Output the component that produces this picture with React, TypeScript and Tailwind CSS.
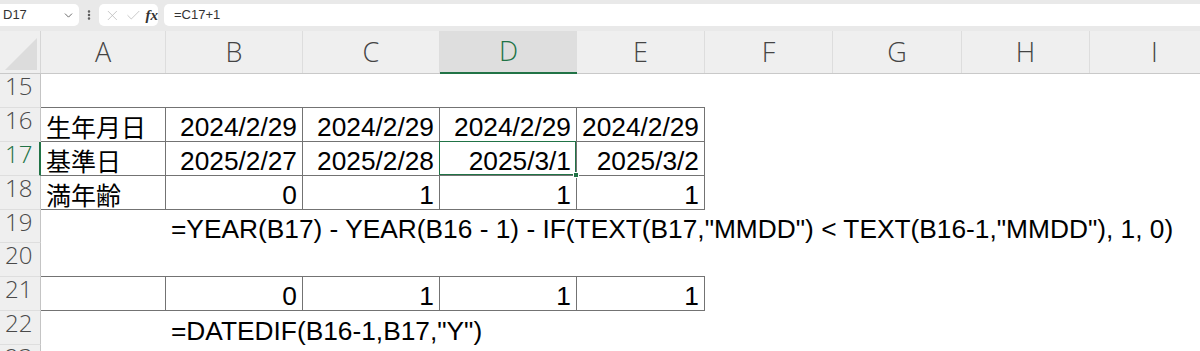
import { ChevronDown, X, Check, EllipsisVertical } from 'lucide-react';

const COLS = ['A', 'B', 'C', 'D', 'E', 'F', 'G', 'H', 'I'];
const GRID = 'grid grid-cols-[41px_125px_137px_137px_137px_128px_128px_129px_128px_130px]';
const LINE = 'border-[#737373]';

type Cell = { text?: string; align?: 'l' | 'r'; spill?: boolean; jp?: boolean };

type Row = {
  n: number;
  h: string;
  cells: Record<number, Cell>;
  boxed?: boolean; // row is part of the bordered table
  above?: boolean; // next row is boxed, draw top edge
};

const ROWS: Row[] = [
  { n: 15, h: 'h-[34px]', cells: {}, above: true },
  {
    n: 16,
    h: 'h-[34px]',
    boxed: true,
    cells: {
      0: { text: '生年月日', jp: true },
      1: { text: '2024/2/29', align: 'r' },
      2: { text: '2024/2/29', align: 'r' },
      3: { text: '2024/2/29', align: 'r' },
      4: { text: '2024/2/29', align: 'r' },
    },
  },
  {
    n: 17,
    h: 'h-[34px]',
    boxed: true,
    cells: {
      0: { text: '基準日', jp: true },
      1: { text: '2025/2/27', align: 'r' },
      2: { text: '2025/2/28', align: 'r' },
      3: { text: '2025/3/1', align: 'r' },
      4: { text: '2025/3/2', align: 'r' },
    },
  },
  {
    n: 18,
    h: 'h-[34px]',
    boxed: true,
    cells: {
      0: { text: '満年齢', jp: true },
      1: { text: '0', align: 'r' },
      2: { text: '1', align: 'r' },
      3: { text: '1', align: 'r' },
      4: { text: '1', align: 'r' },
    },
  },
  {
    n: 19,
    h: 'h-[33px]',
    cells: {
      1: {
        text: '=YEAR(B17) - YEAR(B16 - 1) - IF(TEXT(B17,"MMDD") < TEXT(B16-1,"MMDD"), 1, 0)',
        spill: true,
      },
    },
  },
  { n: 20, h: 'h-[34px]', cells: {}, above: true },
  {
    n: 21,
    h: 'h-[34px]',
    boxed: true,
    cells: {
      1: { text: '0', align: 'r' },
      2: { text: '1', align: 'r' },
      3: { text: '1', align: 'r' },
      4: { text: '1', align: 'r' },
    },
  },
  { n: 22, h: 'h-[34px]', cells: { 1: { text: '=DATEDIF(B16-1,B17,"Y")', spill: true } } },
  { n: 23, h: 'h-[34px]', cells: {} },
];

function FormulaBar() {
  return (
    <div className="h-[31px] bg-[#e9e9e9] flex items-start pt-[4px] gap-[6px] font-['Liberation_Sans',sans-serif]">
      <div className="w-[79px] h-[22px] bg-white rounded-r-[5px] flex items-center justify-between pl-[3px] pr-[4px] text-[13px] text-[#333]">
        <span>D17</span>
        <ChevronDown className="w-[13px] h-[13px] text-[#555]" strokeWidth={1.6} />
      </div>
      <EllipsisVertical className="w-[12px] h-[22px] text-[#555] -mx-[2px]" strokeWidth={3} />
      <div className="w-[59px] h-[22px] bg-white rounded-[5px] flex items-center gap-[4px] pl-[5px]">
        <X className="w-[17px] h-[17px] text-[#b8b8b8]" strokeWidth={1.1} />
        <Check className="w-[17px] h-[17px] text-[#b8b8b8]" strokeWidth={1.1} />
        <span className="font-['Liberation_Serif',serif] italic font-bold text-[15px] text-[#333] leading-none">fx</span>
      </div>
      <div className="flex-1 h-[22px] bg-white rounded-l-[5px] flex items-center pl-[10px] text-[13px] text-[#333]">
        =C17+1
      </div>
    </div>
  );
}

function ColumnHeader() {
  return (
    <div className={`${GRID} h-[43px] bg-[#efefef] border-b border-[#c9c9c9]`}>
      <div className="relative border-r border-[#d6d6d6]">
        <div className="absolute right-[3px] bottom-[3px] w-0 h-0 border-l-[32px] border-l-transparent border-b-[32px] border-b-[#dcdcdc]" />
      </div>
      {COLS.map((c) =>
        c === 'D' ? (
          <div
            key={c}
            className="bg-[#dedede] border-b-2 border-[#217346] -mb-px flex items-center justify-center text-[27px] font-light text-[#217346] font-['Open_Sans',sans-serif]"
          >
            {c}
          </div>
        ) : (
          <div
            key={c}
            className="border-r border-[#dddddd] flex items-center justify-center text-[27px] font-light text-[#444] font-['Open_Sans',sans-serif]"
          >
            {c}
          </div>
        )
      )}
    </div>
  );
}

function SheetRow({ row }: { row: Row }) {
  const active = row.n === 17;
  return (
    <div className={`${GRID} ${row.h}`}>
      <div
        className={`pl-[5px] bg-[#efefef] border-b border-[#dedede] text-[24px] leading-[24px] font-light font-['Open_Sans',sans-serif] ${
          active ? 'border-r-2 border-r-[#217346] text-[#217346]' : 'border-r border-r-[#c4c4c4] text-[#4a4a4a]'
        }`}
      >
        {row.n}
      </div>
      {COLS.map((_, i) => {
        const cell = row.cells[i];
        const inTable = i < 5;
        const border = row.boxed && inTable ? `border-r border-b ${LINE}` : row.above && inTable ? `border-b ${LINE}` : '';
        const selected = active && i === 3;
        return (
          <div
            key={i}
            className={`relative flex items-end ${border} ${cell?.align === 'r' ? 'justify-end pr-[5px]' : 'pl-[5px]'} ${
              cell?.spill ? 'z-10' : ''
            }`}
          >
            {cell?.text && (
              <span
                className={`whitespace-nowrap text-black leading-[26px] ${
                  cell.jp
                    ? "font-['Noto_Sans_CJK_JP',sans-serif] text-[25px] mb-[2px]"
                    : "font-['Liberation_Sans',sans-serif] text-[26.3px] mb-px"
                }`}
              >
                {cell.text}
              </span>
            )}
            {selected && (
              <div className="absolute -top-px -left-px right-0 bottom-0 border border-[#217346] z-20">
                <div className="absolute -right-[4px] -bottom-[4px] w-[6px] h-[6px] bg-[#217346] border border-white" />
              </div>
            )}
          </div>
        );
      })}
    </div>
  );
}

export default function App() {
  return (
    <div className="w-[1200px] h-[351px] overflow-hidden bg-white">
      <FormulaBar />
      <ColumnHeader />
      {ROWS.map((r) => (
        <SheetRow key={r.n} row={r} />
      ))}
    </div>
  );
}
